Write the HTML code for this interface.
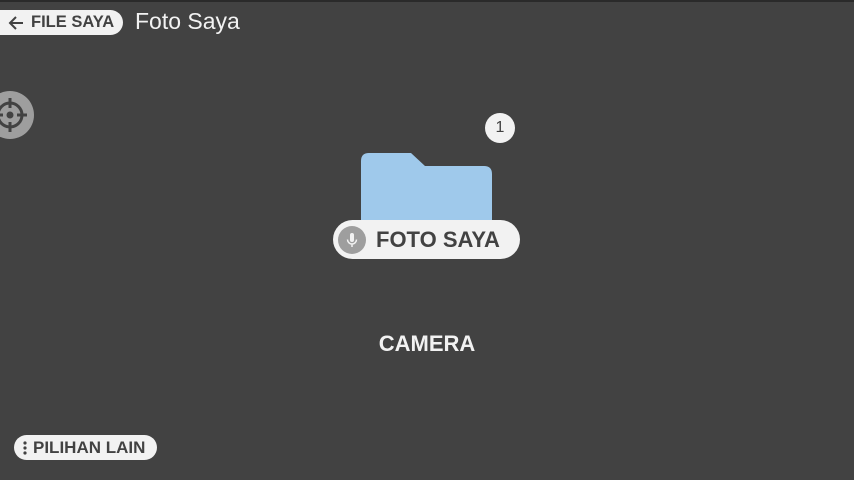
<!DOCTYPE html>
<html><head><style>
body{margin:0;width:854px;height:480px;background:#424242;overflow:hidden;position:relative;font-family:"Liberation Sans",sans-serif;}
.top{position:absolute;left:0;top:0;width:854px;height:2px;background:#2a2a2a}
.pill{position:absolute;background:#f2f2f2;color:#424242;font-weight:bold;border-radius:14px;white-space:nowrap}
</style></head><body>
<div class="top"></div>
<div class="pill" style="left:-14px;top:10px;width:137px;height:25px;border-radius:13px;font-size:16.5px;line-height:25px;">
<svg style="position:absolute;left:21px;top:4px" width="18" height="18" viewBox="0 0 18 18"><path d="M16 9H3M9 3L3 9l6 6" stroke="#424242" stroke-width="2" fill="none"/></svg>
<span style="position:absolute;left:45px">FILE SAYA</span></div>
<div style="position:absolute;left:135px;top:8px;color:#f2f2f2;font-size:23px;">Foto Saya</div>
<svg style="position:absolute;left:-14px;top:91px" width="48" height="48" viewBox="0 0 48 48"><circle cx="24" cy="24" r="24" fill="#9e9e9e"/><circle cx="24" cy="24" r="12" fill="none" stroke="#424242" stroke-width="3"/><path d="M24 7v10M24 31v10M7 24h10M31 24h10" stroke="#424242" stroke-width="3"/><circle cx="24" cy="24" r="3.5" fill="#424242"/></svg>
<div style="position:absolute;left:485px;top:113px;width:30px;height:30px;border-radius:50%;background:#f2f2f2;color:#424242;font-size:16px;line-height:30px;text-align:center">1</div>
<svg style="position:absolute;left:361px;top:153px" width="131" height="70" viewBox="0 0 131 70"><path d="M0 8Q0 0 8 0H50L64 13H123Q131 13 131 21V70H0Z" fill="#9fc9eb"/></svg>
<div class="pill" style="left:333px;top:220px;width:187px;height:39px;border-radius:20px;font-size:22px;line-height:39px;">
<div style="position:absolute;left:5px;top:6px;width:28px;height:28px;border-radius:50%;background:#9e9e9e"></div>
<svg style="position:absolute;left:11px;top:12px" width="16" height="16" viewBox="0 0 16 16"><rect x="6" y="1" width="4" height="9" rx="2" fill="#f2f2f2"/><path d="M3.5 7.5a4.5 4.5 0 0 0 9 0M8 12v3" stroke="#f2f2f2" stroke-width="1.5" fill="none"/></svg>
<span style="position:absolute;left:43px">FOTO SAYA</span></div>
<div style="position:absolute;left:0;width:854px;top:331px;text-align:center;color:#f2f2f2;font-weight:bold;font-size:22px">CAMERA</div>
<div class="pill" style="left:14px;top:435px;width:143px;height:25px;border-radius:13px;font-size:17px;line-height:25px;">
<svg style="position:absolute;left:9px;top:6px" width="4" height="14" viewBox="0 0 4 14"><circle cx="2" cy="2" r="1.6" fill="#424242"/><circle cx="2" cy="7" r="1.6" fill="#424242"/><circle cx="2" cy="12" r="1.6" fill="#424242"/></svg>
<span style="position:absolute;left:19px">PILIHAN LAIN</span></div>
</body></html>
